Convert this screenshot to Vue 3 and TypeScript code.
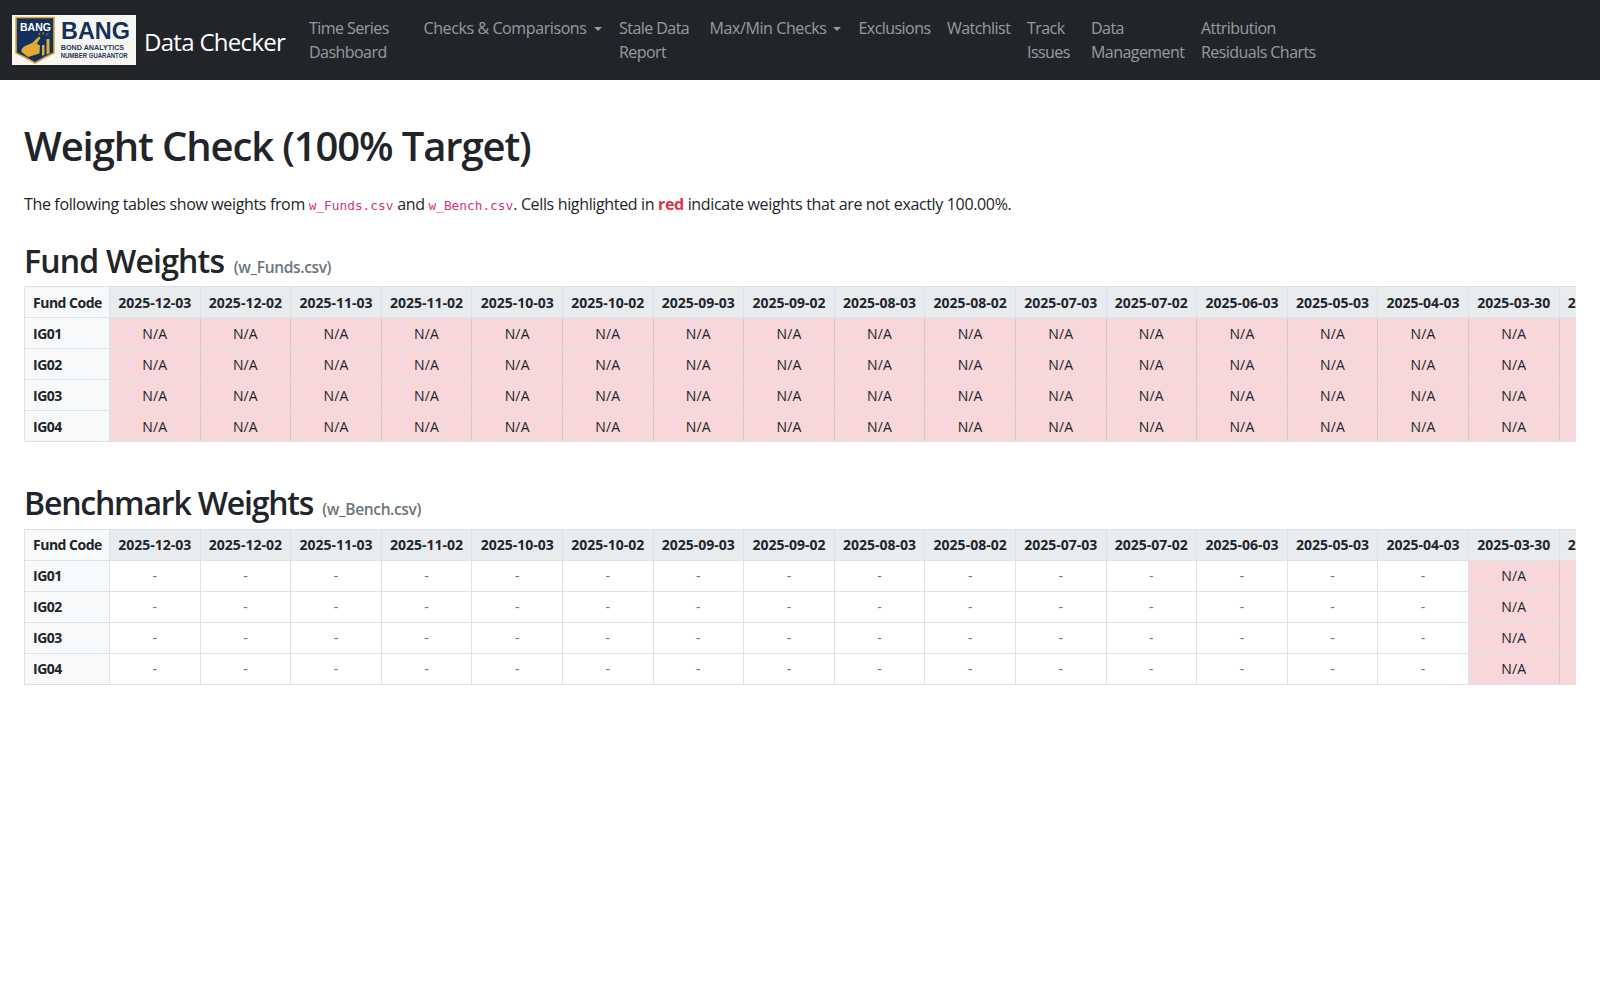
<script setup lang="ts">
type NavItem = {
  lines: string[]
  width: number
  dropdown?: boolean
}

const navItems: NavItem[] = [
  { lines: ['Time Series', 'Dashboard'], width: 114.5 },
  { lines: ['Checks & Comparisons'], width: 195.5, dropdown: true },
  { lines: ['Stale Data', 'Report'], width: 90.5 },
  { lines: ['Max/Min Checks'], width: 149, dropdown: true },
  { lines: ['Exclusions'], width: 88.5 },
  { lines: ['Watchlist'], width: 80 },
  { lines: ['Track', 'Issues'], width: 64 },
  { lines: ['Data', 'Management'], width: 110 },
  { lines: ['Attribution', 'Residuals Charts'], width: 140 },
]

const dates = [
  '2025-12-03', '2025-12-02', '2025-11-03', '2025-11-02', '2025-10-03', '2025-10-02',
  '2025-09-03', '2025-09-02', '2025-08-03', '2025-08-02', '2025-07-03', '2025-07-02',
  '2025-06-03', '2025-05-03', '2025-04-03', '2025-03-30', '2025-03-02',
]

const funds = ['IG01', 'IG02', 'IG03', 'IG04']

// benchmark file only has data gaps from March onwards
const benchMissing = (i: number) => i >= 15
</script>

<template>
  <div class="page">
    <nav class="navbar">
      <a class="brand" href="#">
        <svg class="logo" width="124" height="50" viewBox="0 0 124 50" aria-label="BANG logo">
          <rect width="124" height="50" fill="#f7f7f2" />
          <path d="M4 2.5H42V38Q33 42 23 48Q13 42 4 38Z" fill="#15305a" stroke="#d9a93f" stroke-width="1.6" />
          <text x="23.5" y="16" class="shield-text" text-anchor="middle" textLength="31" lengthAdjust="spacingAndGlyphs">BANG</text>
          <path d="M9.5 37Q9 33 13 31L20 28L27 21.5L28.6 23L24.8 28.4L28 30.5L27.5 38.5L16 42Z" fill="#e0a93a" />
          <path d="M30 30H32.5V40L30 40.8ZM34.5 24H37.5V38.4L34.5 39.4Z" fill="#e0a93a" />
          <path d="M28 20L27 18M31 19.5V17M34 20.5L36 18.5" stroke="#e0a93a" stroke-width="0.9" fill="none" />
          <text x="49" y="24.4" class="logo-main" textLength="69" lengthAdjust="spacingAndGlyphs">BANG</text>
          <text x="48.7" y="34.6" class="logo-sub" textLength="63.5" lengthAdjust="spacingAndGlyphs">BOND ANALYTICS</text>
          <text x="48.7" y="42.6" class="logo-sub small" textLength="67" lengthAdjust="spacingAndGlyphs">NUMBER GUARANTOR</text>
        </svg>
        <span class="brand-name">Data Checker</span>
      </a>
      <ul class="nav-list">
        <li v-for="item in navItems" :key="item.lines[0]" :style="{ width: item.width + 'px' }">
          <a class="nav-link" :class="{ toggle: item.dropdown }" href="#">
            <span v-for="line in item.lines" :key="line" class="nav-line">{{ line }}</span>
          </a>
        </li>
      </ul>
    </nav>

    <main class="content">
      <h1>Weight Check (100% Target)</h1>
      <p class="intro">
        The following tables show weights from <code>w_Funds.csv</code> and <code>w_Bench.csv</code>.
        Cells highlighted in <strong>red</strong> indicate weights that are not exactly 100.00%.
      </p>

      <h2>Fund Weights <small>(w_Funds.csv)</small></h2>
      <div class="table-wrap">
        <table>
          <thead>
            <tr>
              <th class="code-col">Fund Code</th>
              <th v-for="d in dates" :key="d">{{ d }}</th>
            </tr>
          </thead>
          <tbody>
            <tr v-for="f in funds" :key="f">
              <th class="code-col">{{ f }}</th>
              <td v-for="d in dates" :key="d" class="bad">N/A</td>
            </tr>
          </tbody>
        </table>
      </div>

      <h2 class="tight">Benchmark Weights <small>(w_Bench.csv)</small></h2>
      <div class="table-wrap">
        <table>
          <thead>
            <tr>
              <th class="code-col">Fund Code</th>
              <th v-for="d in dates" :key="d">{{ d }}</th>
            </tr>
          </thead>
          <tbody>
            <tr v-for="f in funds" :key="f">
              <th class="code-col">{{ f }}</th>
              <template v-for="(d, i) in dates" :key="d">
                <td v-if="benchMissing(i)" class="bad">N/A</td>
                <td v-else class="empty">-</td>
              </template>
            </tr>
          </tbody>
        </table>
      </div>
    </main>
  </div>
</template>

<style>
html,
body {
  background: #fff;
}
</style>

<style scoped>
.page {
  min-height: 1000px;
  font-family: "Open Sans", "Noto Sans", "Liberation Sans", sans-serif;
  font-size: 16px;
  line-height: 1.5;
  color: #212529;
}

.navbar {
  display: flex;
  align-items: center;
  height: 80px;
  padding: 0 12px;
  background: #212529;
}

.brand {
  display: flex;
  align-items: center;
  gap: 8px;
  width: 289px;
  flex: none;
  color: #fff;
  text-decoration: none;
}

.logo {
  display: block;
  flex: none;
}

.shield-text {
  font: 700 10px "Liberation Sans", sans-serif;
  fill: #fff;
}

.logo-main {
  font: 700 24.5px "Liberation Sans", sans-serif;
  fill: #15305a;
}

.logo-sub {
  font: 700 7.6px "Liberation Sans", sans-serif;
  fill: #24395c;
}

.logo-sub.small {
  font-size: 6.4px;
}

.brand-name {
  margin-top: 3px;
  font-size: 24px;
  line-height: 36px;
  letter-spacing: -0.7px;
  white-space: nowrap;
}

.nav-list {
  display: flex;
  align-items: flex-start;
  margin: 0;
  padding: 0;
  list-style: none;
}

.nav-link {
  display: block;
  padding: 8px;
  color: rgba(255, 255, 255, 0.55);
  text-decoration: none;
  letter-spacing: -0.55px;
}

.nav-line {
  display: block;
  white-space: nowrap;
}

.toggle {
  letter-spacing: -0.4px;
}

.toggle .nav-line {
  display: inline-block;
}

.toggle::after {
  content: "";
  display: inline-block;
  margin-left: 7px;
  vertical-align: 3px;
  border-top: 4.8px solid;
  border-right: 4.8px solid transparent;
  border-left: 4.8px solid transparent;
}

.content {
  padding: 42px 24px 0;
}

h1 {
  margin: 0 0 22px;
  font-size: 40px;
  font-weight: 600;
  line-height: 48px;
  letter-spacing: -1.12px;
}

.intro {
  margin: 0 0 26px;
  letter-spacing: -0.35px;
  white-space: nowrap;
}

code {
  font-family: "DejaVu Sans Mono", "Liberation Mono", monospace;
  font-size: 12.8px;
  letter-spacing: 0;
  color: #d63384;
}

strong {
  color: #dc3545;
  font-weight: 700;
}

h2 {
  margin: 0;
  font-size: 32px;
  font-weight: 600;
  line-height: 38.4px;
  letter-spacing: -0.8px;
}

h2.tight {
  letter-spacing: -1.2px;
}

h2 small {
  margin-left: 2px;
  font-size: 15.5px;
  font-weight: 600;
  letter-spacing: -0.35px;
  color: #6c757d;
}

.table-wrap {
  width: 1552px;
  margin-bottom: 42px;
  overflow: hidden;
}

table {
  width: 1625.2px;
  table-layout: fixed;
  border-collapse: collapse;
  font-size: 14px;
  line-height: 21px;
}

th,
td {
  width: 90.6px;
  height: 31px;
  padding: 0 8px;
  border: 1px solid #dee2e6;
  text-align: center;
  white-space: nowrap;
  box-sizing: border-box;
}

thead th {
  background: #e9ecef;
  font-weight: 700;
  letter-spacing: 0;
}

th.code-col {
  width: 85px;
  background: #f8f9fa;
  font-weight: 700;
  letter-spacing: -0.5px;
  text-align: left;
}

td.bad {
  background: #f8d7da;
  border-right-color: #dfc2c4;
  border-left-color: #dfc2c4;
  letter-spacing: 0.15px;
}

td.empty {
  color: #6c757d;
}
</style>
